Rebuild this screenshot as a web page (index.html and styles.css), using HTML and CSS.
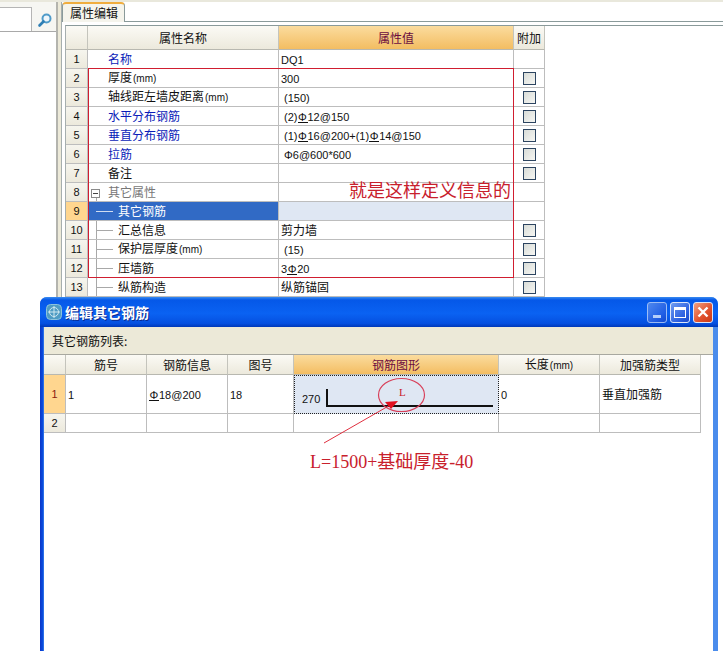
FILE: index.html
```html
<!DOCTYPE html>
<html lang="zh-CN">
<head>
  <meta charset="UTF-8">
  <title>属性编辑</title>
  <link rel="stylesheet" href="styles.css">
</head>
<body>

  <div class="page">
    <div class="top-strip"></div>

    <div class="workspace">
      <div class="left-panel">
        <div class="search">
          <div class="search-input"></div>
          <svg class="search-icon" width="16" height="16" viewBox="0 0 16 16">
            <circle cx="9.5" cy="6.5" r="4" fill="#eef6fb" stroke="#4f9bc9" stroke-width="2"/>
            <path d="M6.5 9.5 L2.5 13.5" stroke="#2f7fb5" stroke-width="2.6" stroke-linecap="round"/>
          </svg>
        </div>
      </div>
      <div class="splitter"></div>

      <div class="right-panel">
        <div class="tab-bar"><div class="tab">属性编辑</div></div>
        <div class="prop-wrap">
          <table class="prop-table">
            <colgroup><col class="c-num"><col class="c-name"><col class="c-val"><col class="c-add"></colgroup>
            <tr class="head">
              <th></th><th>属性名称</th><th class="active">属性值</th><th>附加</th>
            </tr>
            <tr><td class="num">1</td><td class="name link">名称</td><td class="val"><span class="latin">DQ1</span></td><td></td></tr>
            <tr><td class="num">2</td><td class="name">厚度<span class="unit">(mm)</span></td><td class="val"><span class="latin">300</span></td><td class="chk"><span class="box"></span></td></tr>
            <tr><td class="num">3</td><td class="name">轴线距左墙皮距离<span class="unit">(mm)</span></td><td class="val"><span class="latin">&nbsp;(150)</span></td><td class="chk"><span class="box"></span></td></tr>
            <tr><td class="num">4</td><td class="name link">水平分布钢筋</td><td class="val"><span class="latin">&nbsp;(2)<span class="rebar">Φ</span>12@150</span></td><td class="chk"><span class="box"></span></td></tr>
            <tr><td class="num">5</td><td class="name link">垂直分布钢筋</td><td class="val"><span class="latin">&nbsp;(1)<span class="rebar">Φ</span>16@200+(1)<span class="rebar">Φ</span>14@150</span></td><td class="chk"><span class="box"></span></td></tr>
            <tr><td class="num">6</td><td class="name link">拉筋</td><td class="val"><span class="latin">&nbsp;Φ6@600*600</span></td><td class="chk"><span class="box"></span></td></tr>
            <tr><td class="num">7</td><td class="name">备注</td><td class="val"></td><td class="chk"><span class="box"></span></td></tr>
            <tr><td class="num">8</td><td class="group"><span class="minus"></span>其它属性</td><td class="val"></td><td></td></tr>
            <tr class="selected"><td class="num">9</td><td class="child">其它钢筋</td><td class="val"></td><td></td></tr>
            <tr><td class="num">10</td><td class="child">汇总信息</td><td class="val">剪力墙</td><td class="chk"><span class="box"></span></td></tr>
            <tr><td class="num">11</td><td class="child">保护层厚度<span class="unit">(mm)</span></td><td class="val"><span class="latin">&nbsp;(15)</span></td><td class="chk"><span class="box"></span></td></tr>
            <tr><td class="num">12</td><td class="child">压墙筋</td><td class="val"><span class="latin">3<span class="rebar">Φ</span>20</span></td><td class="chk"><span class="box"></span></td></tr>
            <tr><td class="num">13</td><td class="child">纵筋构造</td><td class="val">纵筋锚固</td><td class="chk"><span class="box"></span></td></tr>
          </table>
        </div>
      </div>
    </div>

    <!-- 弹出窗口 -->
    <div class="dialog">
      <div class="title-bar">
        <svg class="app-icon" width="16" height="16" viewBox="0 0 16 16">
          <rect x="0.5" y="0.5" width="15" height="15" rx="4" fill="#4f9cc4" stroke="#8cc4dc"/>
          <circle cx="8" cy="8" r="4.5" fill="none" stroke="#cfe8f0"/>
          <path d="M8 2 V14 M2 8 H14" stroke="#cfe8f0"/>
        </svg>
        <span class="title">编辑其它钢筋</span>
        <div class="win-btns">
          <div class="win-btn min"><span></span></div>
          <div class="win-btn max"><span></span></div>
          <div class="win-btn close">
            <svg width="12" height="12" viewBox="0 0 12 12"><path d="M1.5 1.5 L10.5 10.5 M10.5 1.5 L1.5 10.5" stroke="#fff" stroke-width="2.4"/></svg>
          </div>
        </div>
      </div>
      <div class="dialog-body">
        <div class="list-label">其它钢筋列表:</div>
        <table class="bar-table">
          <colgroup><col class="b-num"><col class="b-a"><col class="b-b"><col class="b-c"><col class="b-d"><col class="b-e"><col class="b-f"></colgroup>
          <tr class="head">
            <th></th><th>筋号</th><th>钢筋信息</th><th>图号</th><th class="active">钢筋图形</th><th>长度<span class="unit">(mm)</span></th><th>加强筋类型</th>
          </tr>
          <tr class="tall">
            <td class="num current">1</td>
            <td><span class="latin">1</span></td>
            <td><span class="latin"><span class="rebar">Φ</span>18@200</span></td>
            <td><span class="latin">18</span></td>
            <td class="shape-cell">
              <div class="shape"><span class="latin">270</span><div class="bar-line"></div></div>
            </td>
            <td><span class="latin">0</span></td>
            <td>垂直加强筋</td>
          </tr>
          <tr>
            <td class="num">2</td><td></td><td></td><td></td><td></td><td></td><td></td>
          </tr>
        </table>
      </div>
    </div>

    <!-- 红色批注 -->
    <svg class="marks" width="723" height="651" viewBox="0 0 723 651">
      <rect x="88.5" y="68.5" width="425" height="209" fill="none" stroke="#d01e30" stroke-width="1"/>
      <ellipse cx="401.5" cy="395" rx="23" ry="16.5" fill="none" stroke="#d8405a" stroke-width="1.2"/>
      <path d="M324 443 L392 404" stroke="#e03040" stroke-width="1"/>
      <path d="M398 401 L385 402 L391 409 Z" fill="#e01020"/>
    </svg>
    <div class="note note-define">就是这样定义信息的</div>
    <div class="note note-l">L</div>
    <div class="note note-formula"><span class="half">L=1500+</span>基础厚度<span class="half">-40</span></div>
  </div>

</body>
</html>
```

FILE: styles.css
```css
* {
  box-sizing: border-box;
}

body {
  margin: 0;
  background-color: #fff;
  font-family: "Noto Sans CJK SC", "Liberation Sans", sans-serif;
  font-size: 12px;
  color: #111;
}

.page {
  position: relative;
  width: 723px;
  height: 651px;
  overflow: hidden;
}

.top-strip {
  height: 2px;
  background-color: #e9e8dc;
}

.workspace {
  display: flex;
  height: 649px;
}

/* left */
.left-panel {
  width: 56px;
}

.search {
  display: flex;
  height: 30px;
  padding-top: 5px;
  border-bottom: 1px solid #a9a9a9;
  background-color: #f6f6f2;
}

.search-input {
  width: 32px;
  background-color: #fff;
  border: 1px solid #b5b5b5;
  border-left: none;
  border-bottom: none;
}

.search-icon {
  margin: 5px 0 0 5px;
}

.splitter {
  width: 5px;
  background-color: #ece9d8;
  border-left: 2px solid #b4b4ae;
}

/* right */
.right-panel {
  flex: 1;
  border-left: 1px solid #a6aeae;
}

.tab-bar {
  height: 20px;
  border-bottom: 1px solid #8a9a9a;
}

.tab {
  width: 63px;
  height: 20px;
  padding-left: 7px;
  line-height: 18px;
  background-color: #f5f4ec;
  border: 1px solid #8a9a9a;
  border-top: 2px solid #f0ad3e;
  border-bottom: none;
  border-radius: 4px 4px 0 0;
}

.prop-wrap {
  height: 300px;
  margin: 3px 0 0 3px;
  border-top: 1px solid #8a9a9a;
  border-left: 1px solid #a6aeae;
}

table {
  border-collapse: separate;
  border-spacing: 0;
  table-layout: fixed;
}

.prop-table {
  width: 479px;
}

.c-num { width: 22px; }
.c-name { width: 191px; }
.c-val { width: 235px; }
.c-add { width: 31px; }

th {
  height: 24px;
  padding: 0;
  font-weight: normal;
  background: linear-gradient(#fbfaf5, #ece9dc);
  border-right: 1px solid #c4c4bc;
  border-bottom: 1px solid #b8b8b0;
}

th.active {
  color: #6a0c40;
  background: linear-gradient(#fbdc9e, #f3bd62);
}

td {
  height: 19px;
  padding: 0 0 0 3px;
  border-right: 1px solid #bdbdbd;
  border-bottom: 1px solid #bdbdbd;
  white-space: nowrap;
  overflow: hidden;
  line-height: 14px;
}

td.num {
  padding: 0;
  text-align: center;
  font-family: "Liberation Sans", sans-serif;
  font-size: 11px;
  background: linear-gradient(#f6f5ee, #ece9dc);
}

td.name {
  padding-left: 20px;
}

td.link {
  color: #0a1cb8;
}

td.group {
  padding-left: 3px;
  color: #777;
  background: linear-gradient(#a8a8a8, #a8a8a8) 8px 14px / 1px 5px no-repeat;
}

.minus {
  display: inline-block;
  width: 9px;
  height: 9px;
  margin-right: 8px;
  vertical-align: -1px;
  border: 1px solid #8a8a8a;
  background: linear-gradient(#444, #444) 1px 3px / 5px 1px no-repeat #fff;
}

td.child {
  padding-left: 30px;
  background:
    linear-gradient(#a8a8a8, #a8a8a8) 8px 0 / 1px 100% no-repeat,
    linear-gradient(#a8a8a8, #a8a8a8) 8px 9px / 17px 1px no-repeat;
}

td.val {
  padding-left: 2px;
}

td.chk {
  padding: 0;
  text-align: center;
  line-height: 0;
}

.box {
  display: inline-block;
  width: 13px;
  height: 13px;
  border: 1px solid #2c4460;
  background: linear-gradient(135deg, #d8dcd8, #f6f6f2);
}

.selected td.num {
  background: #ffd68f;
}

.selected td.child {
  color: #fff;
  background:
    linear-gradient(#d0dcf0, #d0dcf0) 8px 9px / 17px 1px no-repeat,
    #316ac5;
}

.selected td.val {
  background-color: #dfe7f3;
}

.latin {
  font-family: "Liberation Sans", sans-serif;
  font-size: 11px;
}

.unit {
  margin-left: 1px;
  font-family: "Liberation Sans", sans-serif;
  font-size: 10px;
}

.rebar {
  display: inline-block;
  width: 10px;
  line-height: 10px;
  text-align: center;
  border-bottom: 1px solid #111;
}

/* dialog */
.dialog {
  position: absolute;
  left: 40px;
  top: 297px;
  width: 678px;
  height: 380px;
  overflow: hidden;
  border-radius: 7px 7px 0 0;
  background: linear-gradient(90deg, #0a35c8, #0a4fe0 3px, #4a8cec 4px, #4a8cec 5px);
  background-color: #0a4fe0;
}

.title-bar {
  display: flex;
  align-items: center;
  height: 30px;
  padding: 0 5px 0 6px;
  background: linear-gradient(#3a8cf0, #0558e8 10%, #0a62f2 55%, #0550e0 88%, #0038b8);
}

.app-icon {
  flex-shrink: 0;
}

.title {
  margin-left: 3px;
  font-size: 14px;
  font-weight: bold;
  color: #fff;
  text-shadow: 1px 1px 0 #0a2a90;
}

.win-btns {
  display: flex;
  gap: 3px;
  margin-left: auto;
}

.win-btn {
  display: flex;
  align-items: center;
  justify-content: center;
  width: 20px;
  height: 21px;
  border: 1px solid #dce6fa;
  border-radius: 3px;
  background: linear-gradient(135deg, #6f9cf0, #2a5ee0 70%, #1a48c8);
}

.win-btn.min {
  opacity: 0.7;
  align-items: flex-end;
  padding-bottom: 4px;
}

.win-btn.min span {
  width: 8px;
  height: 3px;
  background-color: #fff;
}

.win-btn.max span {
  width: 12px;
  height: 11px;
  border: 1px solid #fff;
  border-top-width: 3px;
}

.win-btn.close {
  background: linear-gradient(135deg, #f0a080, #e0502c 60%, #c83a18);
}

.dialog-body {
  height: 350px;
  margin: 0 5px 0 4px;
  background-color: #fff;
}

.list-label {
  height: 28px;
  padding-left: 8px;
  line-height: 27px;
  background-color: #ece9d8;
  border-bottom: 1px solid #a8a8a0;
}

.bar-table {
  width: 657px;
}

.b-num { width: 22px; }
.b-a { width: 81px; }
.b-b { width: 81px; }
.b-c { width: 66px; }
.b-d { width: 205px; }
.b-e { width: 101px; }
.b-f { width: 101px; }

.bar-table th {
  height: 19px;
  line-height: 17px;
}

.bar-table td {
  padding-left: 2px;
}

.bar-table td.num {
  padding: 0;
}

.tall td {
  height: 39px;
}

.tall td.current {
  color: #8a1a10;
  background: #ffd68f;
}

.bar-table td.shape-cell {
  padding: 0;
  background-color: #dfe7f3;
  border: 1px dotted #222;
}

.shape {
  display: flex;
  align-items: flex-end;
  height: 100%;
  padding: 0 0 6px 7px;
}

.shape .latin {
  margin-bottom: 1px;
}

.bar-line {
  width: 167px;
  height: 18px;
  margin-left: 6px;
  border-left: 2px solid #111;
  border-bottom: 2px solid #111;
}

/* annotations */
.marks {
  position: absolute;
  left: 0;
  top: 0;
}

.note {
  position: absolute;
  color: #c8202c;
  white-space: nowrap;
}

.note-define {
  left: 349px;
  top: 177px;
  font-size: 18px;
  line-height: 25px;
}

.note-l {
  left: 399px;
  top: 385px;
  font-family: "Liberation Serif", serif;
  font-size: 11px;
  line-height: 14px;
}

.note-formula {
  left: 310px;
  top: 447px;
  font-size: 18px;
  line-height: 26px;
}

.half {
  font-family: "Liberation Serif", serif;
  font-size: 18px;
}
```
